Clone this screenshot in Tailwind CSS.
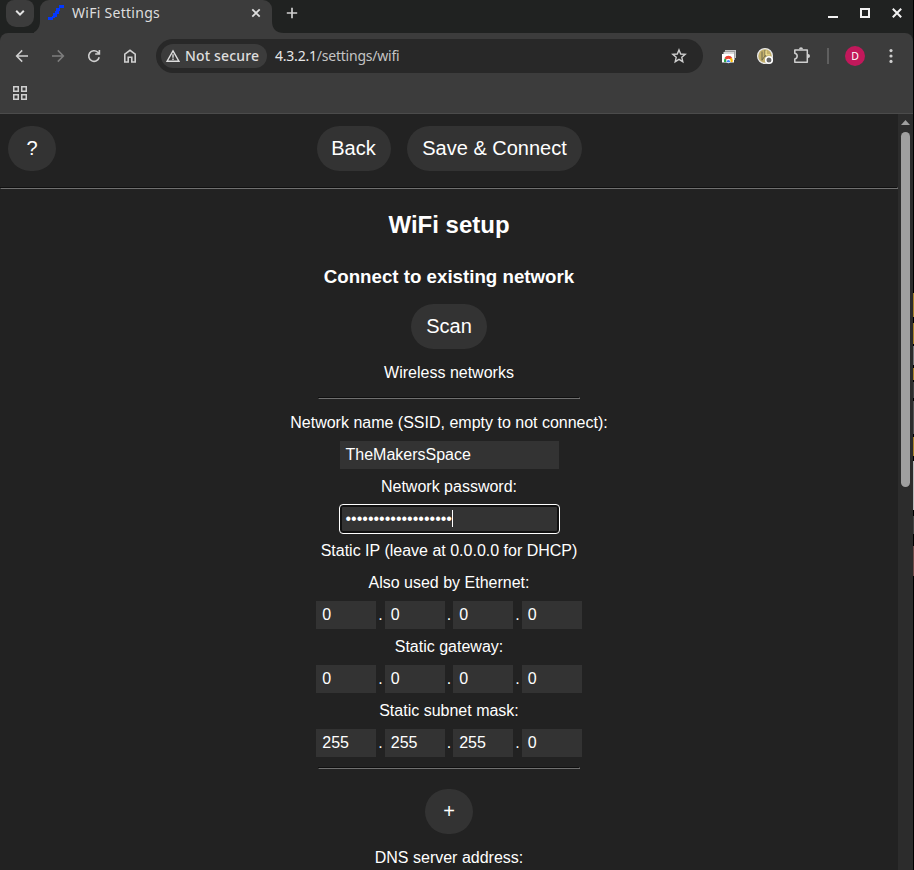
<!DOCTYPE html>
<html lang="en">
<head>
<meta charset="utf-8">
<title>WiFi Settings</title>
<script src="https://cdn.jsdelivr.net/npm/@tailwindcss/browser@4"></script>
</head>
<body class="w-[914px] h-[870px] overflow-hidden bg-black flex">
<div class="w-[913px] h-[870px] flex flex-col bg-[#202221] font-['Noto_Sans',sans-serif] text-[#dedede]">
  <!-- Tab strip -->
  <header class="h-[33px] shrink-0 flex items-start">
    <div class="ml-1.5 w-7 h-[27px] rounded-b-[10px] rounded-t-[8px] bg-[#3c3c3c] flex justify-center">
      <svg class="w-3 h-3 mt-[7px]" viewBox="0 0 12 12" fill="none" stroke="#e3e3e3" stroke-width="2"><path d="M2.2 3.8 6 7.6l3.8-3.8"/></svg>
    </div>
    <svg class="w-1.5 h-[33px]" viewBox="0 0 6 33"><path d="M6 21v12H-4C2 33 6 28 6 21z" fill="#3c3c3c"/></svg>
    <div class="w-[232px] h-[33px] bg-[#3c3c3c] rounded-t-[9px] flex">
      <svg class="ml-2 mt-[5px] w-4 h-[15px]" viewBox="0 0 16 15" fill="#0238ff" shape-rendering="crispEdges"><path d="M11 0h5v3h-5zM8 3h4v3H8zM7 6h4v3H7zM5 8h4v4H5zM4 11h3v2H4zM0 12h5v3H0z"/></svg>
      <span class="ml-2 mt-[3px] w-[178px] text-[14px] leading-5 tracking-[0.28px] whitespace-nowrap">WiFi Settings</span>
      <svg class="w-3 h-3 mt-[7px]" viewBox="0 0 12 12" stroke="#dedede" stroke-width="1.8"><path d="m2.3 2.3 7.4 7.4M9.7 2.3 2.3 9.7"/></svg>
    </div>
    <svg class="w-3 h-[33px]" viewBox="0 0 12 33"><path d="M0 21v12h12C4 33 0 29 0 21z" fill="#3c3c3c"/></svg>
    <svg class="ml-0.5 mt-[7px] w-3 h-3" viewBox="0 0 12 12" stroke="#cfcfcf" stroke-width="1.7"><path d="M6 .8v10.4M.8 6h10.4"/></svg>
    <div class="ml-auto flex mt-[7px] mr-2.5 gap-5">
      <svg class="w-3 h-3" viewBox="0 0 12 12" fill="#f2f2f2"><path d="M1 9h10v2H1z"/></svg>
      <svg class="w-3 h-3" viewBox="0 0 12 12" fill="none" stroke="#f2f2f2" stroke-width="2"><path d="M2 2h8v8H2z"/></svg>
      <svg class="w-3 h-3" viewBox="0 0 12 12" stroke="#f2f2f2" stroke-width="2"><path d="m1.8 1.8 8.4 8.4M10.2 1.8 1.8 10.2"/></svg>
    </div>
  </header>

  <!-- Toolbar -->
  <div class="h-[81px] shrink-0 bg-[#3c3c3c] rounded-t-[8px] border-b border-[#4b4b4b]">
    <div class="h-[46px] flex items-center">
      <svg class="ml-[14px] w-4 h-4" viewBox="0 0 16 16" fill="none" stroke="#cfcfcf" stroke-width="1.5"><path d="M14 8H2.8M8.2 2.4 2.6 8l5.6 5.6"/></svg>
      <svg class="ml-5 w-4 h-4" viewBox="0 0 16 16" fill="none" stroke="#7d7d7d" stroke-width="1.5"><path d="M2 8h11.2M7.8 2.4 13.4 8l-5.6 5.6"/></svg>
      <svg class="ml-5 w-4 h-4" viewBox="0 0 16 16" fill="none" stroke="#cfcfcf" stroke-width="1.6"><path d="M13.2 9.2A5.3 5.3 0 1 1 11.8 4.300L13 5.500M13.400 1.900V6H9.200"/></svg>
      <svg class="ml-5 w-4 h-4" viewBox="0 0 16 16" fill="none" stroke="#cfcfcf" stroke-width="1.6"><path d="M2.800 14V6.200L8 2.300l5.200 3.900V14H9.800V9.200H6.200V14z"/></svg>
      <div class="ml-[18px] w-[547px] h-[34px] rounded-full bg-[#282828] flex items-center pl-[5px] pr-4">
        <div class="w-[106px] h-6 rounded-full bg-[#3c3c3c] flex items-center pl-[5px]">
          <svg class="w-3.5 h-3.5" viewBox="0 0 14 14" fill="none" stroke="#dedede" stroke-width="1.4"><path d="M7 1.900 12.900 12.200H1.100z"/><path d="M7 5.200v3.500M7 9.600V11"/></svg>
          <span class="ml-[5px] text-[14px] leading-5 font-medium tracking-[0.17px] whitespace-nowrap">Not secure</span>
        </div>
        <span class="ml-2 text-[14px] leading-5 tracking-[-0.22px] whitespace-nowrap text-[#c4c4c4]"><span class="text-[#e6e6e6]">4.3.2.1</span>/settings/wifi</span>
        <svg class="ml-auto w-4 h-4" viewBox="0 0 16 16" fill="none" stroke="#cfcfcf" stroke-width="1.400"><path d="m8 1.900 1.700 4.100 4.500.4-3.400 2.900 1 4.400L8 11.400l-3.800 2.300 1-4.400L1.800 6.400l4.500-.4z"/></svg>
      </div>
      <svg class="ml-[18px] w-4 h-4" viewBox="0 0 16 16"><path d="M4 2h11v8H4z" fill="#c4c4c4"/><path d="M3 3.500h11v8.500H3z" fill="#777"/><path d="M2.500 4h11v8h-11z" fill="#dadada"/><path d="M1 6h12v8.500H1z" fill="#fff"/><path d="M3 14a4.300 4.300 0 0 1 1.200-4.300L7 14z" fill="#2da94f"/><path d="M3.500 10a4.400 4.400 0 0 1 7.800 0L9 11.500H5.500z" fill="#ea4335"/><path d="M11 10a4.500 4.500 0 0 1 .6 4H8l1-3.500z" fill="#fbbc04"/><circle cx="7.400" cy="13" r="2.300" fill="#fff"/><path d="M5.800 14.200a1.700 1.700 0 1 1 3.200 0z" fill="#4285f4"/></svg>
      <svg class="ml-[19px] w-[18px] h-[18px]" viewBox="0 0 18 18"><circle cx="9" cy="9" r="7.400" fill="#c3b06c" stroke="#e8e8e8" stroke-width="1.300"/><path d="M9 3v6h5M6 4.500v9M9 9l-3 4" stroke="#6d694f" fill="none"/><path d="M10 3.500V8h4" stroke="#fff0a0" fill="none"/><circle cx="13" cy="13" r="3.300" fill="#666" stroke="#fff" stroke-width="1.600"/></svg>
      <svg class="ml-[18px] w-[18px] h-[18px]" viewBox="0 0 18 18" fill="none" stroke="#cfcfcf" stroke-width="1.500" stroke-linejoin="round"><path d="M2.800 2.900H15.300V15.200H2.800V12C6 11.300 6 6.900 2.800 6.200z"/><path d="M7 2.300a2 2 0 0 1 4 0zM16 6.900a2 2 0 0 1 0 4z" fill="#cfcfcf" stroke="none"/></svg>
      <div class="ml-[17px] w-0.5 h-4 bg-[#5f5f5f]"></div>
      <div class="ml-4 w-5 h-5 rounded-full bg-[#c2185b] text-white text-[10.5px] leading-5 text-center">D</div>
      <svg class="ml-[18px] w-4 h-4" viewBox="0 0 16 16" fill="#cfcfcf"><circle cx="8" cy="2.600" r="1.600"/><circle cx="8" cy="8" r="1.600"/><circle cx="8" cy="13.400" r="1.600"/></svg>
    </div>
    <div class="h-[34px] pl-3 pt-[6px]">
      <svg class="w-4 h-4" viewBox="0 0 16 16" fill="none" stroke="#cfcfcf" stroke-width="1.500"><path d="M1.750 1.750h4.500v4.500h-4.500zM9.750 1.750h4.500v4.500h-4.500zM1.750 9.750h4.500v4.500h-4.500zM9.750 9.750h4.500v4.500h-4.500z"/></svg>
    </div>
  </div>

  <!-- Page viewport -->
  <div class="h-[756px] flex">
    <main class="w-[898px] h-[756px] overflow-hidden bg-[#222] text-white font-['Liberation_Sans',Arial,sans-serif] text-[16px] leading-[34px] text-center">
      <div class="h-[73px] pt-3 px-2 grid grid-cols-[48px_1fr_48px] text-[20px] leading-[45px]">
        <button class="w-12 h-[45px] rounded-full bg-[#333]">?</button>
        <div class="flex justify-center gap-4">
          <button class="w-[74px] h-[45px] rounded-full bg-[#333]">Back</button>
          <button class="w-[175px] h-[45px] rounded-full bg-[#333] pl-px">Save &amp; Connect</button>
        </div>
      </div>
      <hr class="h-0.5 border border-t-[#101010] border-l-[#101010] border-r-[#707070] border-b-[#707070]">
      <h2 class="mt-[20px] h-8 text-[24px] leading-8 font-bold">WiFi setup</h2>
      <h3 class="mt-[19px] h-8 text-[18.72px] font-bold">Connect to existing network</h3>
      <button class="mt-3 block mx-auto w-[76px] h-[45px] rounded-full bg-[#333] text-[20px] leading-[45px]">Scan</button>
      <div class="mt-[7px] h-8">Wireless networks</div>
      <hr class="mt-[9px] mx-auto w-[262px] h-0.5 border border-t-[#101010] border-l-[#101010] border-r-[#707070] border-b-[#707070]">
      <div class="mt-[7px] h-8">Network name (SSID, empty to not connect):</div>
      <div class="mt-[3px] ml-[340px] w-[219px] h-7 bg-[#333] pl-[5.5px] text-left leading-7">TheMakersSpace</div>
      <div class="mt-px h-8">Network password:</div>
      <div class="mt-[2px] ml-[339px] w-[221px] h-[30px] rounded-[4px] border border-white bg-[#101010] p-0.5">
        <div class="h-6 rounded-[1px] bg-[#333] pl-[3.5px] flex items-center leading-6"><span>•••••••••••••••••••</span><span class="-mt-px w-px h-[17px] bg-white"></span></div>
      </div>
      <div class="h-8">Static IP (leave at 0.0.0.0 for DHCP)</div>
      <div class="h-8">Also used by Ethernet:</div>
      <div class="mt-[3px] h-7 flex justify-center text-left leading-7">
        <div class="w-[60px] bg-[#333] pl-1.5">0</div><span class="mx-0.5">.</span>
        <div class="w-[60px] bg-[#333] pl-1.5">0</div><span class="mx-0.5">.</span>
        <div class="w-[60px] bg-[#333] pl-1.5">0</div><span class="mx-0.5">.</span>
        <div class="w-[60px] bg-[#333] pl-1.5">0</div>
      </div>
      <div class="mt-px h-8">Static gateway:</div>
      <div class="mt-[3px] h-7 flex justify-center text-left leading-7">
        <div class="w-[60px] bg-[#333] pl-1.5">0</div><span class="mx-0.5">.</span>
        <div class="w-[60px] bg-[#333] pl-1.5">0</div><span class="mx-0.5">.</span>
        <div class="w-[60px] bg-[#333] pl-1.5">0</div><span class="mx-0.5">.</span>
        <div class="w-[60px] bg-[#333] pl-1.5">0</div>
      </div>
      <div class="mt-px h-8">Static subnet mask:</div>
      <div class="mt-[3px] h-7 flex justify-center text-left leading-7">
        <div class="w-[60px] bg-[#333] pl-1.5">255</div><span class="mx-0.5">.</span>
        <div class="w-[60px] bg-[#333] pl-1.5">255</div><span class="mx-0.5">.</span>
        <div class="w-[60px] bg-[#333] pl-1.5">255</div><span class="mx-0.5">.</span>
        <div class="w-[60px] bg-[#333] pl-1.5">0</div>
      </div>
      <hr class="mt-2.5 mx-auto w-[262px] h-0.5 border border-t-[#101010] border-l-[#101010] border-r-[#707070] border-b-[#707070]">
      <button class="mt-5 block mx-auto w-12 h-[45px] rounded-full bg-[#333] text-[20px] leading-[45px]">+</button>
      <div class="mt-[7px] h-8">DNS server address:</div>
    </main>
    <!-- Scrollbar -->
    <div class="w-[15px] bg-[#2c2c2c] flex flex-col items-center">
      <svg class="mt-1.5 w-[9px] h-[5px]" viewBox="0 0 9 5" fill="#9f9f9f"><path d="M4.500 0 9 5H0z"/></svg>
      <div class="mt-[7px] w-[9px] h-[355px] rounded-full bg-[#9f9f9f]"></div>
    </div>
  </div>
</div>
<!-- Sliver of the desktop behind the window -->
<div class="w-px h-[870px] flex flex-col bg-black">
  <div class="mt-[293px] h-[24px] bg-[#a8842a]"></div>
  <div class="mt-[6px] h-[21px] bg-[#a8842a]"></div>
  <div class="mt-[2px] h-[19px] bg-[#777]"></div>
  <div class="mt-[3px] h-[12px] bg-[#a8842a]"></div>
  <div class="mt-[2px] h-[16px] bg-[#444]"></div>
  <div class="mt-[3px] h-[33px] bg-[#555]"></div>
  <div class="mt-[3px] h-[19px] bg-[#a8842a]"></div>
  <div class="mt-[5px] h-[49px] bg-[#bbb]"></div>
  <div class="mt-[6px] h-[18px] bg-[#444]"></div>
  <div class="mt-[12px] h-[30px] bg-[#6d4a48]"></div>
</div>
</body>
</html>
